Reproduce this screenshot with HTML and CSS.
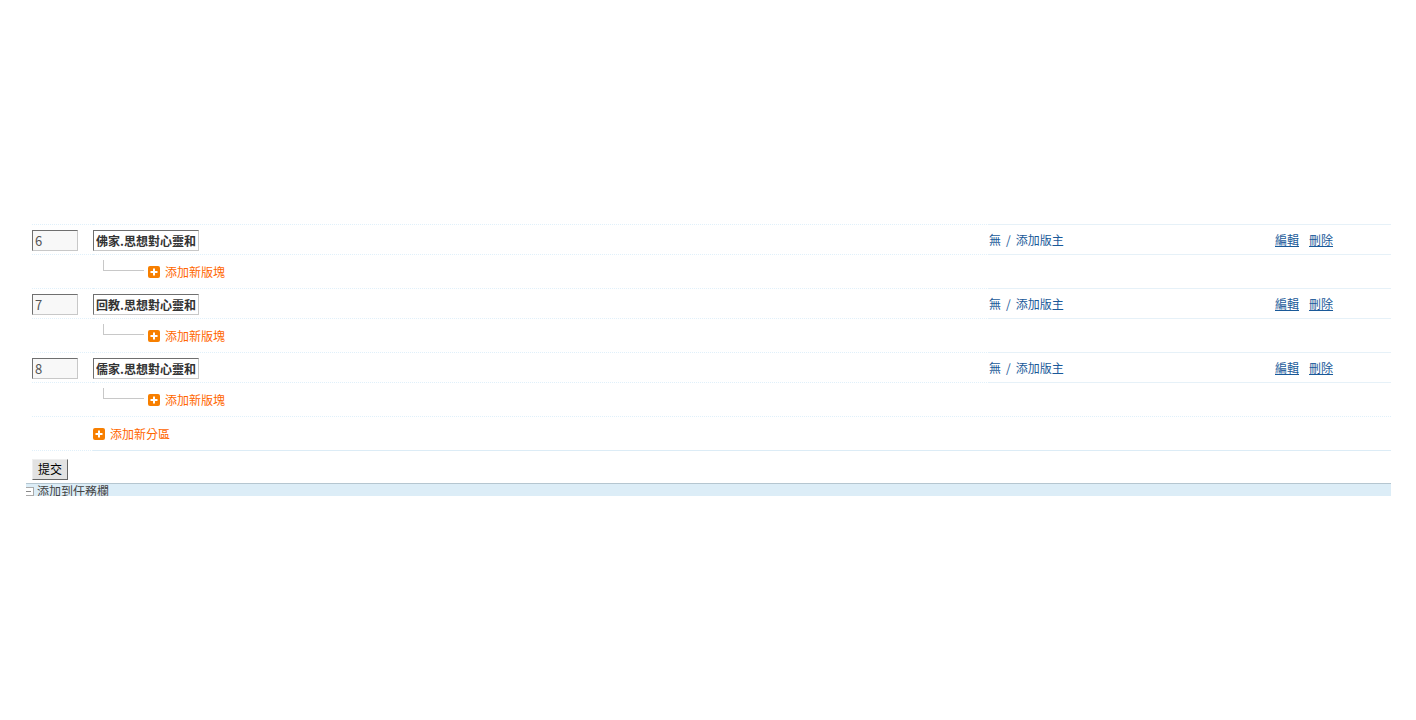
FILE: index.html
```html
<!DOCTYPE html>
<html lang="zh-Hant">
<head>
<meta charset="utf-8">
<title>版塊管理</title>
<link rel="stylesheet" href="styles.css">
</head>
<body>
<main class="panel">
  <div class="forums">
    <div class="row forum-row">
      <div class="cell order"><input class="order-input" value="6"></div>
      <div class="cell name"><input class="name-input" value="佛家.思想對心靈和生活的影響"></div>
      <div class="cell mods solid"><a href="#">無</a><span class="slash">/</span><a href="#">添加版主</a></div>
      <div class="cell ops solid"><a href="#">編輯</a><a href="#">刪除</a></div>
    </div>
    <div class="row sub-row">
      <div class="cell"></div>
      <div class="cell add-board"><span class="elbow"></span><a href="#" class="add"><svg class="plus" viewBox="0 0 12 12"><rect width="12" height="12" rx="2"/><path d="M6 2.500v7M2.500 6h7"/></svg>添加新版塊</a></div>
      <div class="cell solid"></div>
      <div class="cell solid"></div>
    </div>
    <div class="row forum-row">
      <div class="cell order"><input class="order-input" value="7"></div>
      <div class="cell name"><input class="name-input" value="回教.思想對心靈和生活的影響"></div>
      <div class="cell mods solid"><a href="#">無</a><span class="slash">/</span><a href="#">添加版主</a></div>
      <div class="cell ops solid"><a href="#">編輯</a><a href="#">刪除</a></div>
    </div>
    <div class="row sub-row">
      <div class="cell"></div>
      <div class="cell add-board"><span class="elbow"></span><a href="#" class="add"><svg class="plus" viewBox="0 0 12 12"><rect width="12" height="12" rx="2"/><path d="M6 2.500v7M2.500 6h7"/></svg>添加新版塊</a></div>
      <div class="cell solid"></div>
      <div class="cell solid"></div>
    </div>
    <div class="row forum-row">
      <div class="cell order"><input class="order-input" value="8"></div>
      <div class="cell name"><input class="name-input" value="儒家.思想對心靈和生活的影響"></div>
      <div class="cell mods solid"><a href="#">無</a><span class="slash">/</span><a href="#">添加版主</a></div>
      <div class="cell ops solid"><a href="#">編輯</a><a href="#">刪除</a></div>
    </div>
    <div class="row sub-row">
      <div class="cell"></div>
      <div class="cell add-board"><span class="elbow"></span><a href="#" class="add"><svg class="plus" viewBox="0 0 12 12"><rect width="12" height="12" rx="2"/><path d="M6 2.500v7M2.500 6h7"/></svg>添加新版塊</a></div>
      <div class="cell solid"></div>
      <div class="cell solid"></div>
    </div>
    <div class="row end-row">
      <div class="cell"></div>
      <div class="cell add-group"><a href="#" class="add"><svg class="plus" viewBox="0 0 12 12"><rect width="12" height="12" rx="2"/><path d="M6 2.500v7M2.500 6h7"/></svg>添加新分區</a></div>
    </div>
  </div>
  <div class="submit-wrap"><button class="submit" type="button">提交</button></div>
  <div class="taskbar"><span class="box"></span><span>添加到任務欄</span></div>
</main>
</body>
</html>
```
FILE: styles.css
```css
* { box-sizing: border-box; }
html, body { margin: 0; padding: 0; background: #fff; }
body {
  height: 720px;
  overflow: hidden;
  padding: 224px 25px 0 26px;
  font-family: "Noto Sans CJK TC", "Liberation Sans", sans-serif;
  font-size: 12px;
  color: #1a5a99;
}
a { color: #1a5a99; text-decoration: none; }
.forums { margin-left: 6px; }
.row {
  display: grid;
  grid-template-columns: 61px 896px 286px 116px;
}
.cell {
  border-top: 1px dotted #e0f0fa;
  display: flex;
  align-items: center;
}
.solid { border-top: 1px solid #e6f1f8; }
.forum-row { height: 30px; }
.forum-row .order, .forum-row .name { padding-top: 2px; }
.sub-row { height: 34px; }
.end-row {
  height: 35px;
  grid-template-columns: 61px 1298px;
}
.end-row .cell { border-bottom: 1px dotted #e0f0fa; }
.end-row .add-group { border-bottom: 1px solid #dcecf6; }
.order-input, .name-input {
  height: 21px;
  padding: 0 2px;
  border: 1px solid;
  border-color: #6f6f6f #c8c8c8 #c8c8c8 #6f6f6f;
  border-radius: 0;
  font-family: "Noto Sans CJK TC", "Liberation Sans", sans-serif;
  font-size: 12px;
  color: #444;
  outline: 0;
}
.order-input { width: 46px; background: #f8f8f8; font-size: 13px; color: #555; }
.name-input { width: 106px; background: #fff; font-weight: 700; color: #333; }
.mods { gap: 5px; white-space: nowrap; }
.ops { gap: 10px; }
.ops a { text-decoration: underline; }
.add-board { position: relative; padding-left: 55px; }
.elbow {
  position: absolute;
  left: 10px;
  top: 5px;
  width: 41px;
  height: 11px;
  border-left: 1px solid #c8c8c8;
  border-bottom: 1px solid #c8c8c8;
}
.add { color: #f60; display: inline-flex; align-items: center; gap: 5px; white-space: nowrap; }
.plus { width: 12px; height: 12px; flex: none; }
.plus rect { fill: #f77f00; }
.plus path { stroke: #fff; stroke-width: 2; fill: none; }
.submit-wrap { margin: 8px 0 0 6px; height: 24px; }
.submit {
  display: block;
  width: 36px;
  height: 21px;
  padding: 0 0 2px;
  background: #e2e2e2;
  border: 1px solid;
  border-color: #eee #666 #666 #eee;
  border-radius: 0;
  font-family: "Noto Sans CJK TC", "Liberation Sans", sans-serif;
  font-size: 12px;
  color: #000;
}
.taskbar {
  height: 13px;
  overflow: hidden;
  background: #dcedf7;
  border-top: 1px solid #b5c6d0;
  display: flex;
  align-items: flex-start;
  gap: 3px;
  color: #444;
  line-height: 14px;
}
.box {
  position: relative;
  width: 8px;
  height: 9px;
  margin-top: 3px;
  flex: none;
  border: 1px solid #aaa;
  border-left: 0;
  background: #fff;
}
.box::after {
  content: "";
  position: absolute;
  left: 0;
  top: 3px;
  width: 5px;
  height: 1px;
  background: #888;
}
```
